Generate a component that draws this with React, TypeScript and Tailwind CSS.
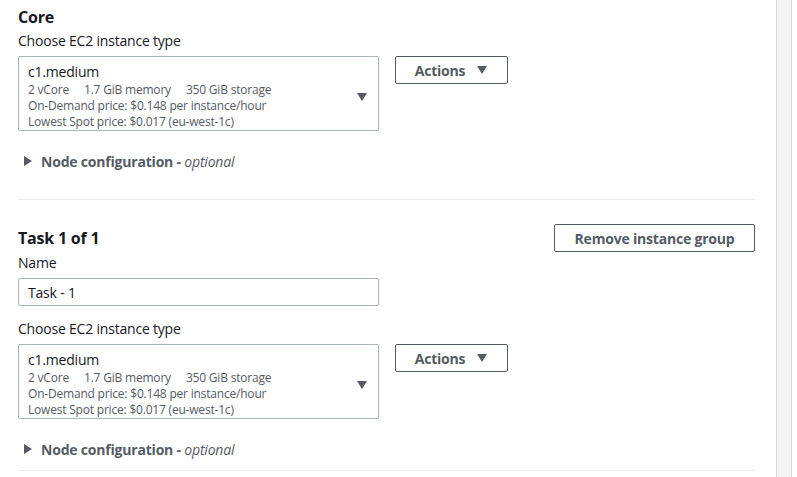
import React from "react";

const Tri = ({ dir = "down", className = "" }: { dir?: "down" | "right"; className?: string }) =>
  dir === "down" ? (
    <svg width="12" height="10" viewBox="0 0 12 10" className={className}>
      <path d="M1 1 H11 L6 9 Z" fill="#545b64" />
    </svg>
  ) : (
    <svg width="10" height="12" viewBox="0 0 10 12" className={className}>
      <path d="M1 1 V11 L9 6 Z" fill="#545b64" />
    </svg>
  );

const InstanceSelect = () => (
  <div className="flex items-start gap-4">
    <div className="w-[361px] h-[75px] border border-[#aab7b8] rounded-[2px] pl-[9px] pr-[10px] pt-[5px] flex items-center justify-between">
      <div className="self-start">
        <div className="text-[14px] leading-[20px] text-[#16191f]">c1.medium</div>
        <div className="text-[12px] leading-[16px] text-[#545b64]">
          <div>
            2 vCore<span className="inline-block w-[15px]" />1.7 GiB memory<span className="inline-block w-[15px]" />350 GiB storage
          </div>
          <div>On-Demand price: $0.148 per instance/hour</div>
          <div>Lowest Spot price: $0.017 (eu-west-1c)</div>
        </div>
      </div>
      <Tri className="mt-[2px]" />
    </div>
    <button className="w-[113px] h-[28px] border border-[#545b64] rounded-[2px] flex items-center justify-center gap-[11px] text-[14px] font-bold text-[#545b64]">
      <span>Actions</span>
      <Tri />
    </button>
  </div>
);

const NodeConfig = () => (
  <div className="flex items-center gap-[8px] pl-[5px] text-[14px] text-[#545b64] h-[20px]">
    <Tri dir="right" />
    <span>
      <span className="font-bold">Node configuration - </span>
      <span className="italic">optional</span>
    </span>
  </div>
);

export default function App() {
  return (
    <div
      className="w-[797px] h-[477px] bg-white flex overflow-hidden tracking-[-0.2px]"
      style={{ fontFamily: '"Open Sans", "Noto Sans", Arial, sans-serif' }}
    >
      <div className="w-[776px] pl-[18px] pr-[21px] text-[#16191f]">
        <div className="pt-[6px] text-[16px] leading-[22px] font-bold">Core</div>
        <div className="mt-[3px] text-[14px] leading-[20px]">Choose EC2 instance type</div>
        <div className="mt-[5px]">
          <InstanceSelect />
        </div>
        <div className="mt-[20px]">
          <NodeConfig />
        </div>
        <div className="mt-[28px] border-t border-[#eaeded]" />
        <div className="mt-[24px] flex items-start justify-between">
          <div className="pt-[3px] text-[16px] leading-[22px] font-bold">Task 1 of 1</div>
          <button className="w-[201px] h-[28px] border border-[#545b64] rounded-[2px] text-[14px] font-bold text-[#545b64]">
            Remove instance group
          </button>
        </div>
        <div className="mt-[1px] text-[14px] leading-[20px]">Name</div>
        <div className="mt-[5px] w-[361px] h-[28px] border border-[#aab7b8] rounded-[2px] pl-[9px] flex items-center text-[14px]">
          Task - 1
        </div>
        <div className="mt-[13px] text-[14px] leading-[20px]">Choose EC2 instance type</div>
        <div className="mt-[5px]">
          <InstanceSelect />
        </div>
        <div className="mt-[20px]">
          <NodeConfig />
        </div>
        <div className="mt-[11px] border-t border-[#eaeded]" />
      </div>
      <div className="w-[16px] h-full bg-[#f2f3f3] border-x border-[#d5dbdb]" />
    </div>
  );
}
